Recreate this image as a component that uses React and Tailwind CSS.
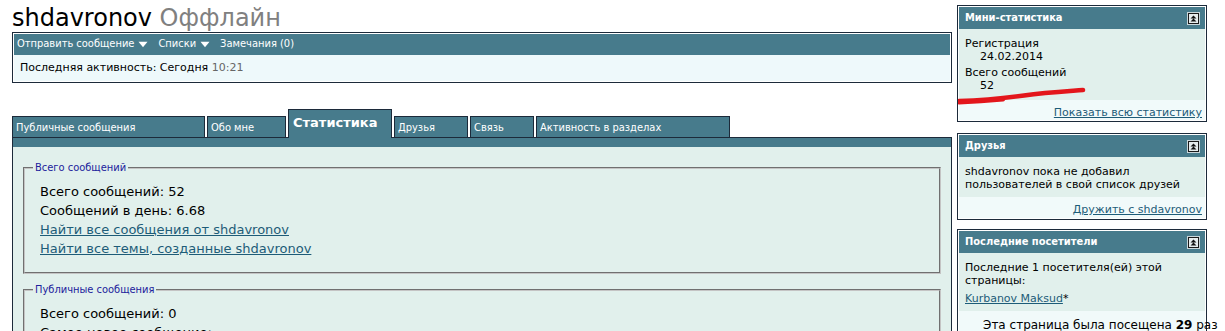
import React from "react";

const verdana = "font-['DejaVu_Sans',Verdana,sans-serif]";
const tahoma = "font-['DejaVu_Sans_Condensed','Liberation_Sans',Tahoma,sans-serif]";

function Arrow() {
  return (
    <svg width="10" height="7" viewBox="0 0 10 7" className="inline-block ml-[4px] mr-[10px]">
      <path d="M0.5 0.8 L9.5 0.8 L5 6.2 Z" fill="#fff" />
    </svg>
  );
}

function Collapse() {
  return (
    <svg width="13" height="13" viewBox="0 0 13 13">
      <rect x="0" y="0" width="13" height="13" fill="#c9d6da" />
      <rect x="1.5" y="1.5" width="10" height="10" fill="#e6eced" stroke="#1a1a1a" />
      <path d="M3.5 6.5 L6.5 3.5 L9.5 6.5 Z M3.5 9.5 L6.5 6.5 L9.5 9.5 Z" fill="#111" />
    </svg>
  );
}

function SideBox({ title, children, footer, footerClass, className = "" }) {
  return (
    <div className={`relative border border-[#1c2a3a] bg-white p-px ${className}`}>
      <div className="h-[22px] bg-[#477b8c] flex items-center justify-between pl-[6px] pr-[5px]">
        <span className={`${tahoma} text-[11px] font-bold text-white`}>{title}</span>
        <Collapse />
      </div>
      <div className={`bg-[#e1f0ec] px-[6px] ${verdana} text-[11px] leading-[13px] text-black`}>
        {children}
      </div>
      <div className={`bg-[#f1fafa] ${footerClass}`}>{footer}</div>
    </div>
  );
}

const tabs = [
  { label: "Публичные сообщения", w: "w-[193px]" },
  { label: "Обо мне", w: "w-[79px]" },
  { label: "Статистика", w: "w-[104px]", active: true },
  { label: "Друзья", w: "w-[74px]" },
  { label: "Связь", w: "w-[64px]" },
  { label: "Активность в разделах", w: "w-[194px]" },
];

function Fieldset({ legend, children, className = "" }) {
  return (
    <fieldset className={`border-2 border-[#c4c4c4] [border-style:groove] pl-[8px] pr-[8px] pb-[14px] ${className}`}>
      <legend className={`${tahoma} text-[11px] leading-[13px] text-[#22229c] px-[2px]`}>{legend}</legend>
      <div className={`pt-[8px] pl-[7px] ${verdana} text-[13px] leading-[19px] text-black`}>{children}</div>
    </fieldset>
  );
}

export default function App() {
  return (
    <div className="flex gap-[5px] pl-[12px] pt-[5px] bg-white min-h-[331px] overflow-hidden">
      <div className="w-[940px] shrink-0">
        <h1 className={`${verdana} text-[24px] leading-[27px] text-black`}>
          shdavronov <span className="text-[#808080]">Оффлайн</span>
        </h1>

        <div className="border border-[#1c2a3a] bg-white p-px">
          <div className={`h-[21px] bg-[#477b8c] flex items-center pl-[3px] ${tahoma} text-[11px] text-white`}>
            <span>Отправить сообщение</span>
            <Arrow />
            <span>Списки</span>
            <Arrow />
            <span>Замечания (0)</span>
          </div>
          <div className={`h-[26px] bg-[#eef9fb] flex items-center pl-[6px] ${verdana} text-[11px] text-black`}>
            Последняя активность: Сегодня&nbsp;<span className="text-[#666]">10:21</span>
          </div>
        </div>

        <div className="mt-[26px] h-[28px] flex items-end gap-[2px]">
          {tabs.map((t) =>
            t.active ? (
              <div
                key={t.label}
                className={`relative z-10 ${t.w} h-[29px] mb-[-1px] border-t border-x border-[#1c2a3a] bg-[#477b8c] pl-[4px] pt-[5px] ${verdana} text-[13px] leading-[16px] font-bold text-white`}
              >
                {t.label}
              </div>
            ) : (
              <div
                key={t.label}
                className={`${t.w} h-[21px] border-t border-x border-[#1c2a3a] bg-[#477b8c] pl-[3px] pt-[4px] ${tahoma} text-[11px] leading-[13px] text-white`}
              >
                {t.label}
              </div>
            )
          )}
        </div>

        <div className="border border-[#1c2a3a]">
          <div className="h-[9px] bg-[#477b8c]" />
          <div className="bg-[#e1f0ec] pt-[14px] px-[10px] pb-[20px]">
            <Fieldset legend="Всего сообщений">
              <div>Всего сообщений: 52</div>
              <div>Сообщений в день: 6.68</div>
              <div>
                <a href="#" className="text-[#1d5c78] underline">Найти все сообщения от shdavronov</a>
              </div>
              <div>
                <a href="#" className="text-[#1d5c78] underline">Найти все темы, созданные shdavronov</a>
              </div>
            </Fieldset>
            <Fieldset legend="Публичные сообщения" className="mt-[9px]">
              <div>Всего сообщений: 0</div>
              <div>Самое новое сообщение: —</div>
            </Fieldset>
          </div>
        </div>
      </div>

      <div className="w-[250px] shrink-0">
        <SideBox
          title="Мини-статистика"
          footerClass={`h-[20px] pt-[6px] pr-[3px] text-right ${verdana} text-[11px] leading-[13px]`}
          footer={
            <a href="#" className="text-[#1d5c78] underline">
              Показать всю статистику
            </a>
          }
        >
          <div className="pt-[8px] pb-[8px]">
            <div>Регистрация</div>
            <div className="pl-[15px]">24.02.2014</div>
            <div className="mt-[3px]">Всего сообщений</div>
            <div className="pl-[15px]">52</div>
          </div>
          <svg className="absolute left-0 top-0 pointer-events-none" width="130" height="100" viewBox="0 0 130 100">
            <path
              d="M1 95 C 25 94.5, 45 92.5, 66 89.5 S 105 85.5, 125 84"
              stroke="#e3161b"
              strokeWidth="4.5"
              strokeLinecap="round"
              fill="none"
            />
            <path d="M1 96.5 C 15 96, 30 95, 45 93.5" stroke="#e3161b" strokeWidth="4" strokeLinecap="round" fill="none" />
          </svg>
        </SideBox>

        <SideBox
          title="Друзья"
          className="mt-[11px]"
          footerClass={`h-[21px] pt-[6px] pr-[3px] text-right ${verdana} text-[11px] leading-[13px]`}
          footer={
            <a href="#" className="text-[#1d5c78] underline">
              Дружить с shdavronov
            </a>
          }
        >
          <div className="pt-[8px] pb-[6px]">
            shdavronov пока не добавил
            <br />
            пользователей в свой список друзей
          </div>
        </SideBox>

        <SideBox
          title="Последние посетители"
          className="mt-[9px]"
          footerClass={`pt-[6px] pb-[4px] pl-[24px] whitespace-nowrap ${verdana} text-[12px] leading-[16px] text-black`}
          footer={
            <span>
              Эта страница была посещена <b>29</b> раз
            </span>
          }
        >
          <div className="pt-[8px] pb-[6px]">
            <div>Последние 1 посетителя(ей) этой</div>
            <div>страницы:</div>
            <div className="mt-[5px]">
              <a href="#" className="text-[#1d5c78] underline">Kurbanov Maksud</a>*
            </div>
          </div>
        </SideBox>
      </div>
    </div>
  );
}
